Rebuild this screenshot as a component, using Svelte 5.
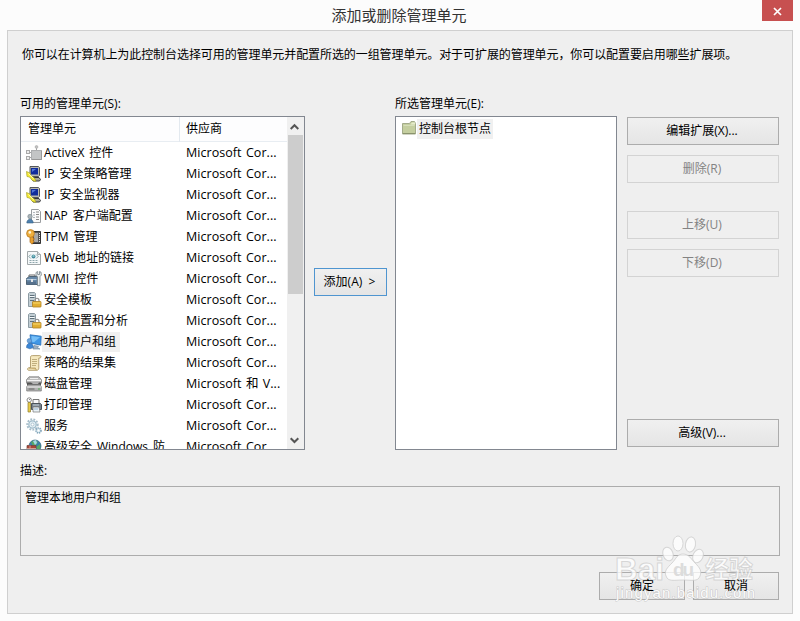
<script>
	const vendor = 'Microsoft Cor...';

	const snapins = [
		{ icon: 'activex', name: 'ActiveX 控件', vendor },
		{ icon: 'ipsec', name: 'IP 安全策略管理', vendor },
		{ icon: 'ipsec', name: 'IP 安全监视器', vendor },
		{ icon: 'nap', name: 'NAP 客户端配置', vendor },
		{ icon: 'tpm', name: 'TPM 管理', vendor },
		{ icon: 'web', name: 'Web 地址的链接', vendor },
		{ icon: 'wmi', name: 'WMI 控件', vendor },
		{ icon: 'server', name: '安全模板', vendor },
		{ icon: 'server', name: '安全配置和分析', vendor },
		{ icon: 'users', name: '本地用户和组', vendor },
		{ icon: 'policy', name: '策略的结果集', vendor },
		{ icon: 'disk', name: '磁盘管理', vendor: 'Microsoft 和 V...' },
		{ icon: 'print', name: '打印管理', vendor },
		{ icon: 'services', name: '服务', vendor },
		{ icon: 'firewall', name: '高级安全 Windows 防', vendor }
	];

	let selected = $state(9);
</script>

{#snippet icon(name)}
	<svg class="icon" width="16" height="16" viewBox="0 0 16 16" fill="none">
		{#if name === 'activex'}
			<path d="M10.5 6V2M6 7.5H2M6 12.5H2" stroke="#a3a3a3" />
			<circle cx="10.5" cy="2" r="1.4" fill="#c4c4c4" stroke="#a5a5a5" stroke-width=".6" />
			<rect x=".5" y="5.5" width="3" height="3" fill="#eee" stroke="#aaa" />
			<rect x=".5" y="11.5" width="3" height="3" fill="#eee" stroke="#aaa" />
			<rect x="5.5" y="5.5" width="10" height="9" fill="#c3c5c6" stroke="#acaeb0" />
			<path d="M6 14.5h9.5V6" stroke="#999" />
		{:else if name === 'ipsec'}
			<path d="M4 .5h8.5l1 1v8l-1 1H4z" fill="#b9b9b0" stroke="#55565a" />
			<path d="M5 2h7v6.5H5z" fill="#122d9c" />
			<path d="M6 3h4L6 6z" fill="#5578d7" />
			<path d="M5 11.5h8l1.5 2-1 1.5H7z" fill="#aaa99b" stroke="#36373c" />
			<path d="M.5 5.5l3.5 1.5 .5 2.5 4 2.5 1.5 3.5-3.5-1-3-3.5-2.5-.5z" fill="#f8ed37" stroke="#a5a02c" stroke-width=".7" />
			<path d="M2.5 7.5l5 5" stroke="#fffcb2" />
		{:else if name === 'nap'}
			<path d="M5.5 1.5h7l2 2v11h-9z" fill="#fafafa" stroke="#9a9da0" />
			<path d="M10 4h3M10 6.5h3M10 9h3M10 11.5h3" stroke="#888" />
			<path d="M7 4.5h2M7 7h2M7 9.5h2" stroke="#aeb5bb" />
			<circle cx="4" cy="8.5" r="2.2" fill="#aab3b7" stroke="#77858d" stroke-width=".6" />
			<path d="M.8 15c0-5 6.4-5 6.4 0z" fill="#4c80af" stroke="#396184" stroke-width=".6" />
		{:else if name === 'tpm'}
			<path d="M6 2.5h8.5v12H6z" fill="#555" stroke="#333" />
			<path d="M8 4h4v9H8z" fill="#a8a8a8" />
			<path d="M13.5 4v10" stroke="#ddd" stroke-dasharray="1 1" />
			<path d="M4 7h3v2l1.5 1L7 11.2l1 1.3L6 15.2l-2-2z" fill="#e9a02e" stroke="#a76617" stroke-width=".7" />
			<circle cx="4.5" cy="4.5" r="3.9" fill="#efaf3d" stroke="#b67925" stroke-width=".8" />
			<circle cx="3.8" cy="3.4" r="1.3" fill="#fff5d7" />
		{:else if name === 'web'}
			<path d="M1.5 1.5h10l3 3v10h-13z" fill="#f5f8f9" stroke="#a1a8aa" />
			<path d="M11.5 1.5v3h3" fill="#d8dddf" stroke="#a1a8aa" />
			<circle cx="7.5" cy="6.5" r="2" fill="#438a9d" />
			<path d="M6.5 6h2" stroke="#c0eee8" />
			<path d="M4.8 4.5l-2 2 2 2M10.2 4.5l2 2-2 2" stroke="#688b92" stroke-width=".8" />
			<path d="M3.5 10.5h9M3.5 12.5h9" stroke="#8ea6ac" stroke-dasharray="2 1" />
		{:else if name === 'wmi'}
			<path d="M3 6V4h6v2" stroke="#666" />
			<path d="M.5 7.5l3-2h9v8H.5z" fill="#6789a9" stroke="#4f6475" />
			<path d="M.5 8.5h10" stroke="#b5c9dc" />
			<path d="M1 10.5h9v3H1z" fill="#56718d" />
			<path d="M5 8h2v3H5z" fill="#e1e3e5" />
			<path d="M10 1.5v3l1.5 1.2v9H14v-9l1.4-1.7-.5-3-1.4-.5v3h-1.8v-3z" fill="#e8edef" stroke="#748087" stroke-width=".8" />
		{:else if name === 'server'}
			<path d="M2.5 1.5l1-1h5l1 1v13h-7z" fill="#c2ced4" stroke="#8d9ba3" />
			<path d="M4 3.5h4.5M4 5.5h4.5M4 8.5h4" stroke="#5f707b" />
			<path d="M3.5 4.5h5" stroke="#f7fbfc" />
			<path d="M9 10V8.5c0-3 4-3 4 0V10" stroke="#909090" stroke-width="1.2" />
			<rect x="6.5" y="9.5" width="8.5" height="5.5" rx=".5" fill="#e1ae31" stroke="#af8123" stroke-width=".8" />
			<path d="M7 11h7.5" stroke="#f9da72" />
		{:else if name === 'users'}
			<path d="M4 .8l11.2 1.4-.4 9-9.8-2z" fill="#4097e6" stroke="#286eb8" stroke-width=".8" />
			<path d="M5.5 2l8.5 1.2-6 5L5.5 7.5z" fill="#76bff7" />
			<path d="M8 11.5l4.5.7-1 1.8 2.5 1H7z" fill="#9fafbf" stroke="#63839f" stroke-width=".6" />
			<circle cx="3.4" cy="6.8" r="2.2" fill="#6fa5da" stroke="#4b84c3" stroke-width=".7" />
			<path d="M.5 13.6c0-6 6.8-6 6.8 0l-3.4 1.2z" fill="#3a87d8" stroke="#3367a2" stroke-width=".6" />
		{:else if name === 'policy'}
			<path d="M4.5 2.2C4.5 1 5.4.6 6.5.6h7.2c1.5 0 1.8 2 .4 2.4h-1.3v9.8c0 1.5-.6 2.5-2 2.5H3c-2 0-2-2.5 0-2.5h1.5z" fill="#f6e9bf" stroke="#a58d57" stroke-width=".8" />
			<path d="M6 4.5h5M6 6.5h5M6 8.5h5M6 10.5h4" stroke="#b29e6c" stroke-width=".8" />
			<path d="M3 13h6.5c0 1 .5 2 1.3 2" fill="#dfc481" stroke="#a58d57" stroke-width=".7" />
		{:else if name === 'disk'}
			<path d="M3 .8h10l2.5 3v3.4H.5V3.8z" fill="#bcbcbc" stroke="#777" stroke-width=".7" />
			<path d="M1 4.5h14" stroke="#f4f4f4" />
			<path d="M1 6.5h4l2 1.5h5l1-1.5h2v2.7H1z" fill="#555" />
			<path d="M2 8.8h12l1.3 2v4.2H.7v-4.2z" fill="#b3b3b3" stroke="#777" stroke-width=".7" />
			<path d="M1 11h14M4 2.5h8" stroke="#eee" />
			<path d="M2.5 13h6" stroke="#656565" />
			<path d="M12 13h2" stroke="#54a654" />
		{:else if name === 'print'}
			<circle cx="3.2" cy="3" r="2.2" fill="#fff" stroke="#888" />
			<path d="M3 3l2-2" stroke="#888" />
			<path d="M2 5.5h2.5v9.5H2z" fill="#e9cc48" stroke="#8d7d30" stroke-width=".7" />
			<path d="M7 2.5h6V7H7z" fill="#f9f9f9" stroke="#777" />
			<path d="M5.5 6.5h9l1 1v5h-10z" fill="#77818a" stroke="#4b535b" />
			<path d="M7 10h6l1 5H7z" fill="#eaf2f6" stroke="#777" stroke-width=".7" />
			<path d="M7 8h6" stroke="#c4d2dc" />
			<path d="M8 12h4" stroke="#8db1cf" />
		{:else if name === 'services'}
			<circle cx="6.5" cy="6.5" r="5.2" stroke="#a7bdca" stroke-width="2" stroke-dasharray="1.8 1.3" />
			<circle cx="6.5" cy="6.5" r="3.7" fill="#e6f1f6" stroke="#a1bccb" stroke-width="1.3" />
			<circle cx="6.5" cy="6.5" r="1.5" fill="#fff" stroke="#9fb8c6" stroke-width=".8" />
			<circle cx="12.5" cy="12.5" r="2.5" fill="#d7e7ef" stroke="#84a6ba" stroke-width="1.7" stroke-dasharray="1.3 .8" />
			<circle cx="12.5" cy="12.5" r="1" fill="#fff" />
		{:else if name === 'firewall'}
			<circle cx="9" cy="7" r="6" fill="#397eae" stroke="#31627d" stroke-width=".7" />
			<path d="M5 3l4-2 3 2-2 3-3 1zM10 8l4-3 .5 4-3 3z" fill="#55a866" />
			<path d="M7 2l3-1 1 3-2 2z" fill="#a6d8e9" />
			<path d="M1 6.5h9v9H1z" fill="#a74437" stroke="#744038" stroke-width=".7" />
			<path d="M1 9.5h9M1 12.5h9M4 6.5v3M7 9.5v3" stroke="#dfb5a7" stroke-width=".8" />
		{:else if name === 'folder'}
			<path d="M1.5 3.5h7l1.5-2h3.5l1 2v10.5h-13z" fill="#c4ce9f" stroke="#a3ab8a" />
			<path d="M9.5 4.5h4.5v-2h-3z" fill="#e6ebcb" />
			<path d="M2.5 5h11v1h-11z" fill="#d6deba" />
			<path d="M2 13.5h12" stroke="#8a936d" />
		{/if}
	</svg>
{/snippet}

<div class="window">
	<header>
		<h1>添加或删除管理单元</h1>
		<button class="close" aria-label="关闭">
			<svg width="9" height="9" viewBox="0 0 9 9"><path d="M1 1l7 7M8 1L1 8" stroke="#fff" stroke-width="1.7" /></svg>
		</button>
	</header>

	<main>
		<p class="intro">你可以在计算机上为此控制台选择可用的管理单元并配置所选的一组管理单元。对于可扩展的管理单元，你可以配置要启用哪些扩展项。</p>

		<div class="columns">
			<section class="available">
				<h2>可用的管理单元(S):</h2>
				<div class="box list">
					<div class="table">
						<div class="row head">
							<span class="name">管理单元</span>
							<span class="vendor">供应商</span>
						</div>
						{#each snapins as item, i}
							<!-- svelte-ignore a11y_click_events_have_key_events, a11y_no_static_element_interactions -->
							<div class="row" onclick={() => (selected = i)}>
								<div class="name">
									{@render icon(item.icon)}
									<span class="label" class:selected={selected === i}>{item.name}</span>
								</div>
								<span class="vendor">{item.vendor}</span>
							</div>
						{/each}
					</div>
					<div class="scrollbar">
						<svg width="16" height="17" viewBox="0 0 16 17"><path d="M3.7 12L7.5 8.2l3.8 3.8" fill="none" stroke="#555" stroke-width="2" /></svg>
						<div class="thumb"></div>
						<svg width="16" height="17" viewBox="0 0 16 17"><path d="M3.7 6.2L7.5 10l3.8-3.8" fill="none" stroke="#555" stroke-width="2" /></svg>
					</div>
				</div>
			</section>

			<button class="btn add">添加(A)&nbsp; &gt;</button>

			<section class="chosen">
				<h2>所选管理单元(E):</h2>
				<div class="box tree">
					{@render icon('folder')}
					<span class="label selected">控制台根节点</span>
				</div>
			</section>

			<div class="actions">
				<button class="btn">编辑扩展(X)...</button>
				<button class="btn" disabled>删除(R)</button>
				<button class="btn up" disabled>上移(U)</button>
				<button class="btn" disabled>下移(D)</button>
				<button class="btn advanced">高级(V)...</button>
			</div>
		</div>

		<h2 class="desc-title">描述:</h2>
		<div class="desc">管理本地用户和组</div>

		<footer>
			<button class="btn"><span>确定</span></button>
			<button class="btn"><span>取消</span></button>
		</footer>
	</main>

	<div class="watermark">
		<svg width="144" height="72" viewBox="0 0 144 72">
			<g class="ghost">
				<text x="0" y="45" font-size="31" font-weight="bold" textLength="49" lengthAdjust="spacingAndGlyphs">Bai</text>
				<ellipse cx="53" cy="19" rx="5" ry="7" transform="rotate(-20 53 19)" />
				<ellipse cx="63" cy="8.5" rx="5" ry="7.5" />
				<ellipse cx="75.5" cy="9.5" rx="5" ry="7.5" transform="rotate(10 75.5 9.5)" />
				<ellipse cx="83" cy="21" rx="5" ry="7" transform="rotate(25 83 21)" />
				<path d="M68 19c6 0 8 5 12 9 5 5 7 8 5 13-2 6-8 4-17 4s-15 2-17-4c-2-5 1-8 6-13 4-4 5-9 11-9z" />
				<text x="90" y="43" font-size="24" font-weight="bold" textLength="48">经验</text>
			</g>
			<text class="du" x="58" y="41" font-size="19" font-weight="bold" textLength="21">du</text>
			<text class="site" x="1" y="63" font-size="15" textLength="139">jingyan.baidu.com</text>
		</svg>
	</div>
</div>

<style>
	:global(body) {
		margin: 0;
		background: #fcfcfc;
	}

	.window {
		position: relative;
		box-sizing: border-box;
		width: 800px;
		height: 621px;
		padding: 0 7px 7px;
		overflow: hidden;
		background: #fcfcfc;
		color: #000;
		font-family: 'Open Sans', 'Noto Sans CJK SC', sans-serif;
		font-size: 12px;
		line-height: 20px;
	}

	header {
		display: flex;
		align-items: flex-start;
		height: 30px;
	}

	h1 {
		flex: 1;
		margin: 0;
		padding-left: 29px;
		color: #333;
		font-size: 15px;
		font-weight: 400;
		line-height: 31px;
		text-align: center;
	}

	.close {
		display: flex;
		align-items: center;
		justify-content: center;
		width: 31px;
		height: 21px;
		padding: 2px 0 0;
		border: 0;
		background: #c75050;
	}

	main {
		box-sizing: border-box;
		height: 584px;
		padding: 14px 12px 0;
		border: 1px solid #cfcfcf;
		background: #efefef;
	}

	.intro {
		height: 49px;
		margin: 0 0 0 2px;
		letter-spacing: -0.08px;
		white-space: nowrap;
	}

	h2 {
		margin: 0;
		height: 22px;
		font-size: 12px;
		font-weight: 400;
		line-height: 20px;
	}

	.columns {
		display: flex;
		height: 356px;
	}

	.available {
		width: 285px;
	}

	.chosen {
		width: 222px;
	}

	.box {
		box-sizing: border-box;
		display: flex;
		height: 334px;
		border: 1px solid #828790;
		background: #fff;
		overflow: hidden;
	}

	.table {
		flex: 1;
		overflow: hidden;
	}

	.row {
		display: flex;
		align-items: center;
		height: 21px;
		white-space: nowrap;
	}

	.name {
		display: flex;
		align-items: center;
		flex: none;
		box-sizing: border-box;
		width: 159px;
		padding-left: 5px;
		overflow: hidden;
		word-spacing: 1.8px;
	}

	.vendor {
		flex: 1;
		padding-left: 6px;
		font-size: 12.5px;
		letter-spacing: 0.05px;
		word-spacing: 1px;
	}

	.head {
		height: 25px;
		box-sizing: border-box;
		border-bottom: 1px solid #e8edf2;
		background: #fdfdfe;
	}

	.head span {
		font-size: 12px;
		letter-spacing: 0;
		line-height: 26px;
	}

	.head .name {
		padding-left: 7px;
		border-right: 1px solid #e3e9ef;
	}

	.icon {
		flex: none;
	}

	.label {
		padding: 0 4px 0 2px;
	}

	.label.selected {
		background: #f0f0f0;
	}

	.scrollbar {
		display: flex;
		flex-direction: column;
		width: 17px;
		background: #f0f0f0;
	}

	.scrollbar svg:last-child {
		margin-top: auto;
	}

	.thumb {
		width: 15px;
		height: 159px;
		margin: 1px 0 0 1px;
		background: #cdcdcd;
	}

	.tree {
		padding: 2px 0 0 5px;
	}

	.tree .icon {
		margin-top: 1px;
	}

	.tree .label {
		height: 20px;
		padding-right: 2px;
	}

	.btn {
		box-sizing: border-box;
		height: 28px;
		padding: 0 2px 0 0;
		border: 1px solid #acacac;
		background: linear-gradient(#f0f0f0, #e5e5e5);
		color: #000;
		font: inherit;
	}

	.btn:disabled {
		border-color: #d3d3d3;
		background: #efefef;
		color: #838383;
	}

	.add {
		width: 73px;
		margin: 174px 8px 0 9px;
		border-color: #4f95d0;
	}

	.actions {
		display: flex;
		flex-direction: column;
		gap: 10px;
		width: 152px;
		margin-left: 10px;
		padding: 23px 0 3px;
	}

	.up {
		margin-top: 18px;
	}

	.advanced {
		margin-top: auto;
	}

	.desc-title {
		height: 36px;
		line-height: 42px;
	}

	.desc {
		box-sizing: border-box;
		height: 70px;
		padding: 1px 4px;
		border: 1px solid #acacac;
	}

	footer {
		display: flex;
		justify-content: flex-end;
		gap: 8px;
		padding: 16px 1px 0 0;
	}

	footer .btn {
		width: 86px;
		padding: 0;
	}

	/* keep the captions above the watermark */
	footer span {
		position: relative;
		z-index: 1;
	}

	.watermark {
		position: absolute;
		left: 615px;
		top: 535px;
		font-family: 'Liberation Sans', 'Noto Sans CJK SC', sans-serif;
		pointer-events: none;
	}

	.ghost {
		fill: rgba(255, 255, 255, 0.75);
		stroke: rgba(200, 200, 200, 0.7);
		stroke-width: 1px;
	}

	.du {
		fill: #dcdcdc;
	}

	.site {
		fill: #fbfbfb;
		stroke: rgba(175, 175, 175, 0.6);
		stroke-width: 1px;
		paint-order: stroke;
	}
</style>
